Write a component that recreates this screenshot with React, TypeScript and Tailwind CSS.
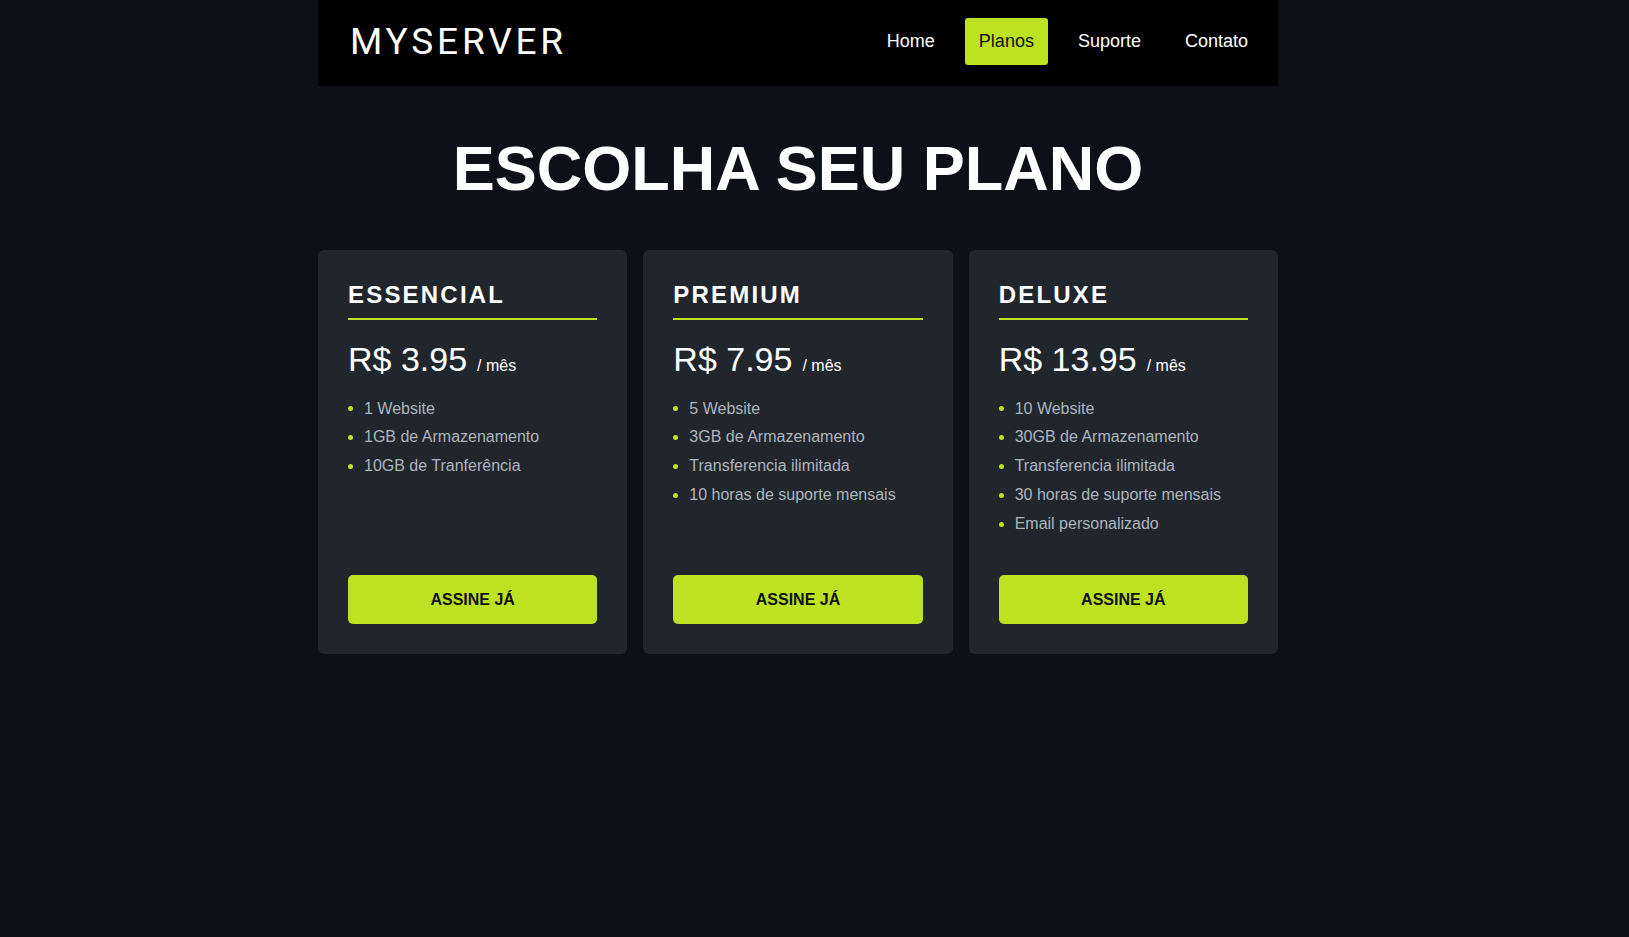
const plans = [
  {
    name: "ESSENCIAL",
    price: "R$ 3.95",
    features: ["1 Website", "1GB de Armazenamento", "10GB de Tranferência"],
  },
  {
    name: "PREMIUM",
    price: "R$ 7.95",
    features: ["5 Website", "3GB de Armazenamento", "Transferencia ilimitada", "10 horas de suporte mensais"],
  },
  {
    name: "DELUXE",
    price: "R$ 13.95",
    features: [
      "10 Website",
      "30GB de Armazenamento",
      "Transferencia ilimitada",
      "30 horas de suporte mensais",
      "Email personalizado",
    ],
  },
];

const links = ["Home", "Planos", "Suporte", "Contato"];

export default function App() {
  return (
    <div className="min-h-[937px] bg-[#0d1117] font-['Liberation_Sans',Arial,sans-serif] text-white">
      <div className="ml-[318px] w-[960px]">
        <header className="flex h-[86px] items-center justify-between bg-black pb-[3px] pl-8 pr-4">
          <div className="font-['Roboto',sans-serif] text-[37px] font-normal tracking-[3.8px] text-white">MYSERVER</div>
          <nav className="flex items-center gap-4">
            {links.map((l) => (
              <a
                key={l}
                href="#"
                className={
                  l === "Planos"
                    ? "rounded-[3px] bg-[#bce222] px-[14px] py-[13px] text-[18px] leading-[21px] text-[#111]"
                    : "px-[14px] py-[13px] text-[18px] leading-[21px] text-white"
                }
              >
                {l}
              </a>
            ))}
          </nav>
        </header>

        <h1 className="mb-[46px] mt-[46px] text-center text-[63px] font-bold leading-[1.15]">ESCOLHA SEU PLANO</h1>

        <div className="grid grid-cols-3 gap-4">
          {plans.map((p) => (
            <div key={p.name} className="flex flex-col rounded-md bg-[#21262d] px-[30px] pb-[30px] pt-[27px]">
              <h2 className="border-b-2 border-[#bce222] pb-[5px] text-[24px] font-bold tracking-[2.2px]">{p.name}</h2>
              <div className="mt-5 flex items-baseline">
                <span className="text-[34px] leading-[1.15]">{p.price}</span>
                <span className="ml-2.5 text-[16px]">/ mês</span>
              </div>
              <ul className="mt-[15px] flex-1">
                {p.features.map((f) => (
                  <li key={f} className="flex items-center text-[16px] leading-[1.8] text-[#adb5bd]">
                    <span className="mr-[11px] h-[5px] w-[5px] rounded-full bg-[#bce222]" />
                    {f}
                  </li>
                ))}
              </ul>
              <button className="mt-9 rounded-[5px] bg-[#bce222] py-[15px] text-[16px] font-bold leading-[19px] text-[#111]">
                ASSINE JÁ
              </button>
            </div>
          ))}
        </div>
      </div>
    </div>
  );
}
